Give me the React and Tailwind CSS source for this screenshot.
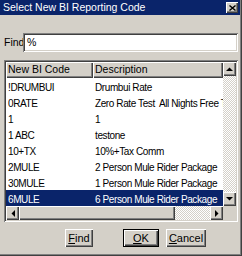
import React from "react";

const ROWS = [
  ["!DRUMBUI", "Drumbui Rate"],
  ["0RATE", "Zero Rate Test  All Nights Free Test"],
  ["1", "1"],
  ["1 ABC", "testone"],
  ["10+TX", "10%+Tax Comm"],
  ["2MULE", "2 Person Mule Rider Package"],
  ["30MULE", "1 Person Mule Rider Package"],
  ["6MULE", "6 Person Mule Rider Package"],
];

const raised =
  "shadow-[inset_1px_1px_#ffffff,inset_-1px_-1px_#404040,inset_-2px_-2px_#808080]";
const sunken =
  "shadow-[inset_1px_1px_#808080,inset_-1px_-1px_#ffffff,inset_2px_2px_#404040,inset_-2px_-2px_#d4d0c8]";
const dither =
  "bg-[repeating-conic-gradient(#ffffff_0_25%,#d4d0c8_0_50%)] bg-[length:2px_2px]";

function Arrow({ dir }) {
  const pts = {
    up: "0,4 7,4 3.5,0.5",
    down: "0,0 7,0 3.5,3.5",
    left: "4,0 4,7 0.5,3.5",
    right: "0,0 0,7 3.5,3.5",
  }[dir];
  const vert = dir === "up" || dir === "down";
  return (
    <div className={`w-[13px] h-[14px] bg-[#d4d0c8] ${raised} flex items-center justify-center shrink-0`}>
      <svg width={vert ? 7 : 4} height={vert ? 4 : 7}>
        <polygon points={pts} fill="#000" />
      </svg>
    </div>
  );
}

function Btn({ children, def, className }) {
  return (
    <div
      className={`h-[18px] flex items-center justify-center text-[11px] bg-[#d4d0c8] ${
        def
          ? "shadow-[inset_0_0_0_1px_#000,inset_2px_2px_#ffffff,inset_-2px_-2px_#404040,inset_-3px_-3px_#808080]"
          : raised
      } ${className}`}
    >
      {children}
    </div>
  );
}

export default function App() {
  return (
    <div
      className="w-[242px] h-[256px] bg-[#d4d0c8] flex flex-col overflow-hidden shadow-[inset_-1px_-1px_#404040,inset_-2px_-2px_#808080]"
      style={{ fontFamily: '"Liberation Sans", Arial, sans-serif' }}
    >
      <div className="h-[15px] mr-[2px] bg-[#0a246a] flex items-center justify-between pl-[3px] pr-[2px]">
        <span className="text-white text-[10.5px] leading-none">Select New BI Reporting Code</span>
        <div className={`w-[12px] h-[11px] bg-[#d4d0c8] ${raised} flex items-center justify-center`}>
          <svg width="7" height="6">
            <path d="M0.5 0.5 L6.5 5.5 M6.5 0.5 L0.5 5.5" stroke="#000" strokeWidth="1.4" />
          </svg>
        </div>
      </div>

      <div className="flex items-center mt-[18px] ml-[4px]">
        <span className="text-[10.5px] text-black w-[19px]">Find</span>
        <div className={`w-[215px] h-[19px] bg-white ${sunken} flex items-center pl-[4px] text-[10.5px]`}>%</div>
      </div>

      <div className={`mt-[8px] ml-[4px] w-[234px] h-[162px] bg-white ${sunken} p-[2px] flex flex-col`}>
        <div className="flex flex-1 min-h-0">
          <div className="flex-1 flex flex-col overflow-hidden">
            <div className="flex h-[16px] shrink-0 text-[10.5px]">
              <div className={`w-[87px] bg-[#d4d0c8] ${raised} flex items-center pl-[2px]`}>New BI Code</div>
              <div className={`flex-1 bg-[#d4d0c8] ${raised} flex items-center pl-[2px]`}>Description</div>
            </div>
            {ROWS.map(([code, desc], i) => {
              const sel = i === ROWS.length - 1;
              return (
                <div
                  key={code}
                  className={`flex h-[16px] shrink-0 items-center pt-[3px] text-[10px] tracking-[-0.4px] whitespace-pre ${
                    sel ? "bg-[#0a246a] text-white" : "text-black"
                  }`}
                >
                  <div className="w-[87px] pl-[2px]">{code}</div>
                  <div className="flex-1 pl-[2px] overflow-hidden">{desc}</div>
                </div>
              );
            })}
          </div>
          <div className={`w-[13px] flex flex-col ${dither}`}>
            <Arrow dir="up" />
            <div className="flex-1" />
            <Arrow dir="down" />
          </div>
        </div>
        <div className="flex h-[14px] shrink-0">
          <div className={`flex-1 flex ${dither}`}>
            <Arrow dir="left" />
            <div className={`w-[156px] h-[14px] bg-[#d4d0c8] ${raised}`} />
            <div className="flex-1" />
            <Arrow dir="right" />
          </div>
          <div className="w-[13px] bg-[#d4d0c8]" />
        </div>
      </div>

      <div className="flex mt-[7px] ml-[65px] gap-[7px]">
        <Btn className="w-[28px]">
          <span><u>F</u>ind</span>
        </Btn>
        <Btn def className="w-[36px] ml-[23px]">
          <span><u>O</u>K</span>
        </Btn>
        <Btn className="w-[40px]">
          <span><u>C</u>ancel</span>
        </Btn>
      </div>
    </div>
  );
}
